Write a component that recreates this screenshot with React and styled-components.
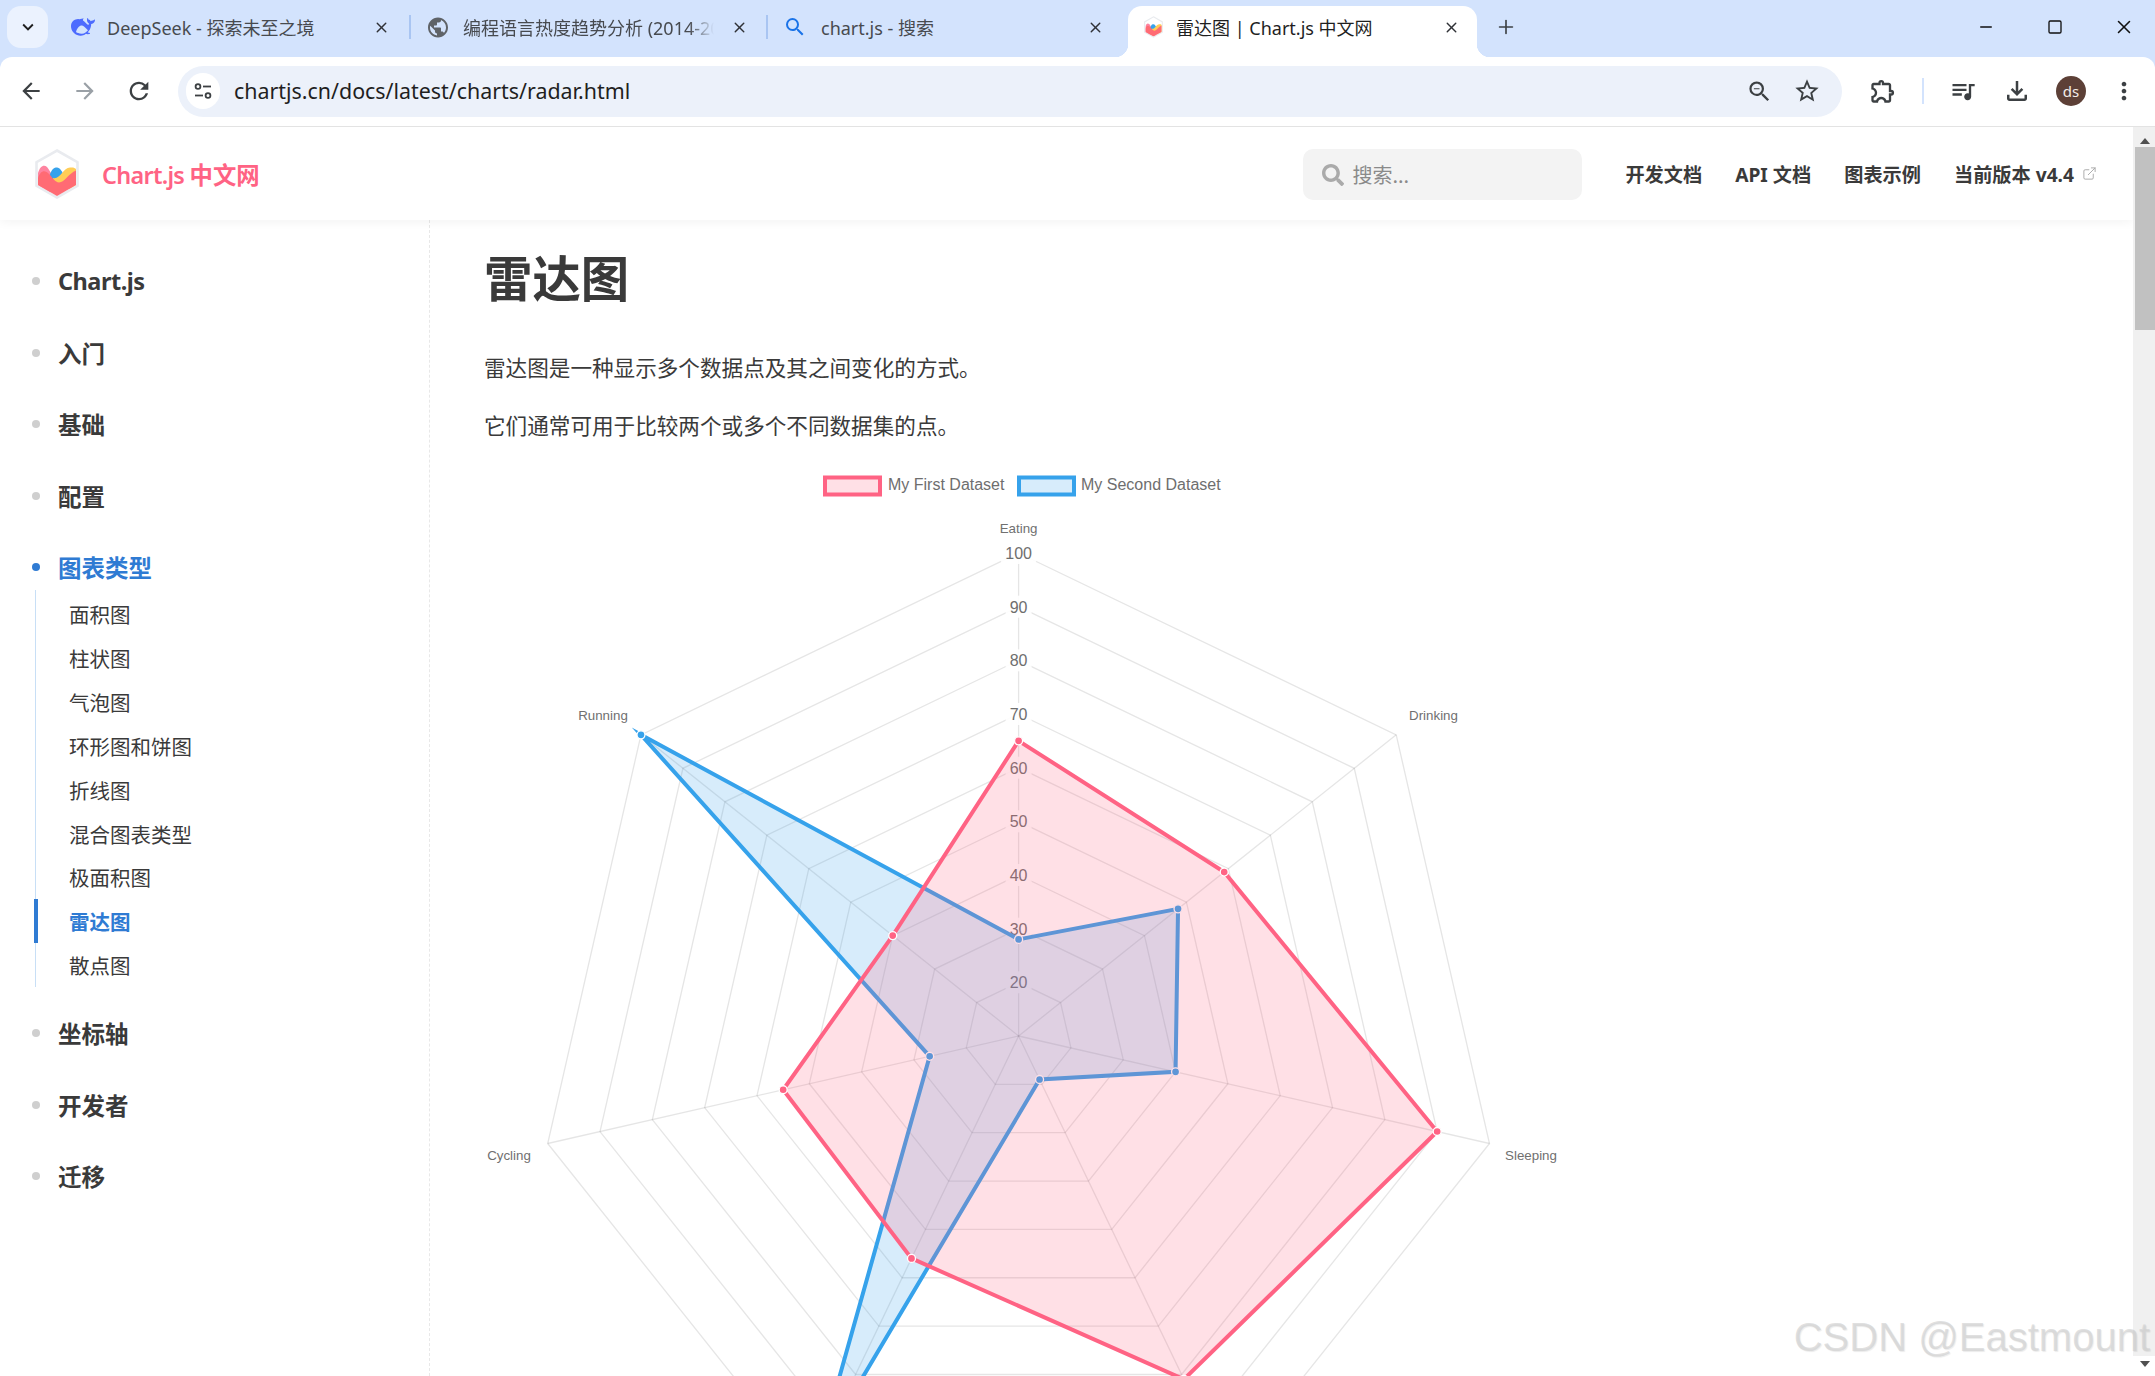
import React from 'react';
import styled, { createGlobalStyle } from 'styled-components';
import { ExternalLink, Minus, Plus, Square, X } from 'lucide-react';
import {
  MdArrowBack, MdArrowForward, MdRefresh, MdOutlineZoomOut, MdOutlineStarBorder,
  MdOutlineExtension, MdQueueMusic, MdOutlineFileDownload, MdMoreVert, MdPublic,
  MdSearch, MdKeyboardArrowDown,
} from 'react-icons/md';
import { FaSearch } from 'react-icons/fa';

const SANS = '"Noto Sans", "Noto Sans CJK SC", sans-serif';
const CJK = '"Noto Sans CJK SC", "Noto Sans", sans-serif';

const Global = createGlobalStyle`
  html, body { margin: 0; padding: 0; height: 100%; overflow: hidden; background: #fff; }
  * { box-sizing: border-box; }
  body { font-family: ${SANS}; color: #3a3a3a; }
`;

const Window = styled.div`
  position: relative;
  width: 2155px;
  height: 1376px;
  display: flex;
  flex-direction: column;
  overflow: hidden;
  background: #d3e3fd;
`;

/* ---------- tab strip ---------- */
const TabStrip = styled.div`
  height: 57px;
  display: flex;
  align-items: flex-start;
  padding-left: 7px;
  flex: none;
`;
const TabMenu = styled.div`
  width: 41px;
  height: 42px;
  margin-top: 6px;
  margin-right: 6px;
  border-radius: 14px;
  background: #ebf2fe;
  display: flex;
  align-items: center;
  justify-content: center;
  color: #1f1f1f;
`;
const Tab = styled.div`
  position: relative;
  width: ${(p) => p.$w}px;
  height: ${(p) => (p.$active ? 51 : 42)}px;
  margin-top: 6px;
  margin-left: ${(p) => (p.$active ? 6 : 0)}px;
  padding: 0 ${(p) => p.$right}px 0 ${(p) => p.$left}px;
  display: flex;
  align-items: center;
  background: ${(p) => (p.$active ? '#fff' : 'transparent')};
  border-radius: 14px 14px 0 0;
  ${(p) => p.$active && `
    padding-bottom: 9px;
    &::before, &::after {
      content: '';
      position: absolute;
      bottom: 0;
      width: 13px;
      height: 13px;
    }
    &::before { left: -13px; background: radial-gradient(circle at 0 0, transparent 13px, #fff 13.5px); }
    &::after { right: -13px; background: radial-gradient(circle at 100% 0, transparent 13px, #fff 13.5px); }
  `}
`;
const TabIcon = styled.div`
  width: 24px;
  height: 24px;
  flex: none;
  display: flex;
  align-items: center;
  justify-content: center;
  color: ${(p) => p.$color || '#5f6368'};
`;
const TabTitle = styled.div`
  flex: 1;
  min-width: 0;
  margin-left: ${(p) => p.$gap}px;
  margin-right: ${(p) => p.$endGap || 0}px;
  font-size: 18px;
  white-space: nowrap;
  overflow: hidden;
  color: ${(p) => (p.$active ? '#1f1f1f' : '#474a4f')};
  ${(p) => p.$fade && `
    -webkit-mask-image: linear-gradient(to right, #000 90%, transparent 100%);
    mask-image: linear-gradient(to right, #000 90%, transparent 100%);
  `}
`;
const TabClose = styled.div`
  width: 20px;
  height: 20px;
  flex: none;
  display: flex;
  align-items: center;
  justify-content: center;
  color: #2f3136;
`;
const TabDivider = styled.div`
  width: 2px;
  height: 24px;
  margin-top: 15px;
  background: #a9c5f2;
  flex: none;
`;
const NewTab = styled.div`
  margin-left: 18px;
  margin-top: 16px;
  color: #3c4043;
  display: flex;
`;
const WindowButtons = styled.div`
  margin-left: auto;
  margin-right: -3px;
  display: flex;
  height: 54px;
  align-items: center;
`;
const WinBtn = styled.div`
  width: 69px;
  display: flex;
  justify-content: center;
  color: #111;
`;

/* ---------- toolbar ---------- */
const Toolbar = styled.div`
  height: 70px;
  flex: none;
  background: #fff;
  border-radius: 12px 12px 0 0;
  border-bottom: 1px solid #e3e3e3;
  display: flex;
  align-items: center;
  padding: 0 0 1px 4px;
`;
const ToolBtn = styled.div`
  width: ${(p) => p.$w || 54}px;
  height: 44px;
  flex: none;
  display: flex;
  align-items: center;
  justify-content: center;
  color: ${(p) => (p.$off ? '#9aa0a6' : '#3c4043')};
`;
const Address = styled.div`
  width: 1664px;
  height: 51px;
  margin-left: 12px;
  margin-right: 14px;
  border-radius: 26px;
  background: #ecf1fa;
  display: flex;
  align-items: center;
  padding: 0 11px 0 8px;
  flex: none;
`;
const SiteChip = styled.div`
  width: 34px;
  height: 36px;
  border-radius: 18px;
  background: #fff;
  display: flex;
  align-items: center;
  justify-content: center;
  flex: none;
`;
const Url = styled.div`
  flex: 1;
  margin-left: 14px;
  padding-bottom: 2px;
  font-size: 21.4px;
  color: #1f1f1f;
  white-space: nowrap;
`;
const ToolSep = styled.div`
  width: 2px;
  height: 26px;
  margin: 0 12px;
  background: #d3e3fd;
  flex: none;
`;
const Avatar = styled.div`
  width: 30px;
  height: 30px;
  border-radius: 50%;
  background: #5d4037;
  color: #f2ece9;
  font-size: 15px;
  display: flex;
  align-items: center;
  justify-content: center;
`;

/* ---------- page ---------- */
const Viewport = styled.div`
  flex: 1;
  min-height: 0;
  display: flex;
  background: #fff;
`;
const Page = styled.div`
  flex: 1;
  min-width: 0;
  display: flex;
  flex-direction: column;
  overflow: hidden;
`;
const Navbar = styled.header`
  position: relative;
  z-index: 2;
  height: 93px;
  flex: none;
  display: flex;
  align-items: center;
  padding: 0 36px 0 35px;
  background: #fff;
  box-shadow: 0 2px 10px rgba(0, 0, 0, 0.05);
`;
const Brand = styled.div`
  margin-left: 23px;
  font-size: 23.4px;
  font-weight: 600;
  color: #ff6384;
  white-space: nowrap;
  letter-spacing: -0.7px;
  b { font-weight: 700; letter-spacing: 0; }
`;
const SearchBox = styled.div`
  margin-left: auto;
  margin-right: 43px;
  margin-top: 2px;
  width: 279px;
  height: 51px;
  border-radius: 10px;
  background: #f3f3f3;
  display: flex;
  align-items: center;
  padding-left: 19px;
  color: #aaa;
`;
const SearchHint = styled.span`
  margin-left: 8px;
  font-size: 20px;
  color: #8a8a8a;
  font-family: ${CJK};
`;
const NavLinks = styled.nav`
  display: flex;
  align-items: center;
  gap: 33px;
`;
const NavLink = styled.a`
  font-size: 19.2px;
  font-weight: 700;
  color: #3a3a3a;
  display: flex;
  align-items: center;
  gap: 8px;
  white-space: nowrap;
  svg { color: #a8a8a8; }
`;
const Body = styled.div`
  flex: 1;
  min-height: 0;
  display: flex;
`;
const Sidebar = styled.aside`
  width: 430px;
  flex: none;
  border-right: 1px dashed #e8e8e8;
  padding: 39px 0 0 32px;
`;
const Section = styled.section`
  margin-bottom: 27.5px;
`;
const SectionTitle = styled.div`
  height: 44px;
  display: flex;
  align-items: center;
  gap: 18px;
  font-size: 23.5px;
  font-weight: 700;
  letter-spacing: ${(p) => (p.$latin ? '-0.5px' : '0')};
  color: ${(p) => (p.$active ? '#2f7bd3' : '#3a3a3a')};
`;
const Dot = styled.i`
  width: 8px;
  height: 8px;
  border-radius: 50%;
  flex: none;
  background: ${(p) => (p.$active ? '#2f7bd3' : '#cfcfcf')};
`;
const SubList = styled.ul`
  list-style: none;
  margin: 1px 0 -3.5px 3px;
  padding: 2.5px 0 0;
  border-left: 1.4px solid #c8dff6;
`;
const SubItem = styled.li`
  position: relative;
  height: 43.85px;
  padding-left: 33px;
  display: flex;
  align-items: center;
  font-size: 20.5px;
  font-family: ${CJK};
  font-weight: ${(p) => (p.$active ? 700 : 400)};
  color: ${(p) => (p.$active ? '#2f7bd3' : '#3a3a3a')};
  ${(p) => p.$active && `
    &::before {
      content: '';
      position: absolute;
      left: -2px;
      top: 0;
      bottom: 0;
      width: 4px;
      background: #2f7bd3;
    }
  `}
`;
const Content = styled.main`
  flex: 1;
  min-width: 0;
  padding: 27px 0 0 54px;
`;
const Title = styled.h1`
  margin: 0;
  font-size: 48.4px;
  line-height: 58px;
  font-weight: 700;
  color: #3a3a3a;
  font-family: ${CJK};
`;
const Para = styled.p`
  margin: ${(p) => p.$top}px 0 0;
  font-size: 21.6px;
  line-height: 36px;
  color: #3a3a3a;
  font-family: ${CJK};
`;
const ChartSvg = styled.svg`
  display: block;
  margin-top: 20px;
  flex: none;
`;
const Scrollbar = styled.div`
  width: 22px;
  flex: none;
  background: #f0f0f0;
  display: flex;
  flex-direction: column;
`;
const ScrollBtn = styled.div`
  height: 20px;
  flex: none;
  display: flex;
  align-items: center;
  justify-content: center;
  padding: ${(p) => (p.$down ? '0 0 4px 2px' : '8px 0 0 2px')};
  background: ${(p) => (p.$down ? '#fff' : '#f0f0f0')};
  &::after {
    content: '';
    border-left: 5.5px solid transparent;
    border-right: 5.5px solid transparent;
    ${(p) => (p.$down ? 'border-top: 6px solid #505050;' : 'border-bottom: 6px solid #505050;')}
  }
`;
const ScrollThumb = styled.div`
  margin-left: 2px;
  height: 183px;
  background: #c1c1c1;
  flex: none;
`;
const ScrollRest = styled.div`
  flex: 1;
`;
const Watermark = styled.div`
  position: absolute;
  right: 5px;
  bottom: 16px;
  font-family: "Liberation Sans", sans-serif;
  font-size: 40px;
  line-height: 46px;
  color: rgba(205, 205, 205, 0.62);
  text-shadow: 1px 1px 1px rgba(0, 0, 0, 0.08);
  white-space: nowrap;
`;

/* ---------- drawings ---------- */
const DeepSeekIcon = () => (
  <svg width="24" height="24" viewBox="0 0 24 24" fill="#4d6bfe">
    <path d="M23.748 4.482c-.254-.124-.364.113-.512.234-.051.039-.094.09-.137.136-.372.397-.806.657-1.373.626-.829-.046-1.537.214-2.163.848-.133-.782-.575-1.248-1.247-1.548-.352-.156-.708-.311-.955-.65-.172-.241-.219-.51-.305-.774-.055-.16-.11-.323-.293-.35-.2-.031-.278.136-.356.276-.313.572-.434 1.202-.422 1.84.027 1.436.633 2.58 1.838 3.393.137.093.172.187.129.323-.082.28-.18.552-.266.833-.055.179-.137.217-.329.14a5.526 5.526 0 01-1.736-1.18c-.857-.828-1.631-1.742-2.597-2.458a11.365 11.365 0 00-.689-.471c-.985-.957.13-1.743.388-1.836.27-.098.093-.432-.779-.428-.872.004-1.67.295-2.687.684a3.055 3.055 0 01-.465.137 9.597 9.597 0 00-2.883-.102c-1.885.21-3.39 1.102-4.497 2.623C.082 8.606-.231 10.684.152 12.85c.403 2.284 1.569 4.175 3.36 5.653 1.858 1.533 3.997 2.284 6.438 2.14 1.482-.085 3.133-.284 4.994-1.86.47.234.962.327 1.78.397.63.059 1.236-.03 1.705-.128.735-.156.684-.837.419-.961-2.155-1.004-1.682-.595-2.113-.926 1.096-1.296 2.746-2.642 3.392-7.003.05-.347.007-.565 0-.845-.004-.17.035-.237.23-.256a4.173 4.173 0 001.545-.475c1.396-.763 1.96-2.015 2.093-3.517.02-.23-.004-.467-.247-.588z" />
    <path d="M5 17c1.500-5 5-8 8-5.500 1.500 1.200 3 3 4 3.800-1 1.300-4 3.800-6.500 3.500C8 18.400 6.300 18 5 17z" fill="#d3e3fd" />
  </svg>
);

const SiteInfoIcon = () => (
  <svg width="20" height="20" viewBox="0 0 20 20" fill="none" stroke="#3c4043" strokeWidth="1.8">
    <circle cx="5" cy="5.5" r="2.4" />
    <path d="M10 5.500h8" />
    <path d="M2 14.500h8" />
    <circle cx="15" cy="14.500" r="2.4" />
  </svg>
);

const ChartLogo = ({ w, h }) => (
  <svg width={w} height={h} viewBox="0 0 44 50" style={{ flex: 'none' }}>
    <defs>
      <clipPath id={`hex${w}`}>
        <path d="M22 3 41 14V36L22 47 3 36V14Z" />
      </clipPath>
    </defs>
    <path d="M22 1.500 42.500 13.200V36.800L22 48.500 1.500 36.800V13.200Z" fill="#fff" stroke="#e9ebef" strokeWidth="2.6" />
    <g clipPath={`url(#hex${w})`}>
      <path d="M3 24C5 17 9 15 12 18S18 30 24 32L12 47H3Z" fill="#fe84a0" />
      <path d="M14 28C17 19 19 18.500 22 18.500S27 22 30 29L22 34Z" fill="#36a2eb" />
      <path d="M18 29C25 31 28 19 35 18.500S41 21 44 24V40H18Z" fill="#ffcd56" />
      <path d="M3 29C6 21 10 21 14 25S21 35 26 33 34 24 42 21V50H3Z" fill="#ff6b74" />
    </g>
  </svg>
);

const CX = 1018.6;
const CY = 1037;
const R100 = 483;
const FIRST = [65, 59, 90, 81, 56, 55, 40];
const SECOND = [28, 48, 40, 19, 96, 27, 100];
const TICKS = [20, 30, 40, 50, 60, 70, 80, 90, 100];
const AXES = [0, 1, 2, 3, 4, 5, 6];

const polar = (i, r) => {
  const a = (i * 2 * Math.PI) / 7;
  return [CX + r * Math.sin(a), CY - r * Math.cos(a)];
};
const radius = (v) => ((v - 10) / 90) * R100;
const pointsOf = (vals) => vals.map((v, i) => polar(i, radius(v)));
const toAttr = (pts) => pts.map((p) => p.map((n) => n.toFixed(2)).join(',')).join(' ');

const Dataset = ({ values, rgb }) => {
  const pts = pointsOf(values);
  return (
    <g>
      <polygon
        points={toAttr(pts)}
        fill={`rgba(${rgb},0.2)`}
        stroke={`rgb(${rgb})`}
        strokeWidth="4"
        strokeLinejoin="miter"
        strokeMiterlimit="10"
      />
      {pts.map((p, i) => (
        <circle key={i} cx={p[0]} cy={p[1]} r="4" fill={`rgb(${rgb})`} stroke="#fff" strokeWidth="1.33" />
      ))}
    </g>
  );
};

const POINT_LABELS = [
  ['Eating', CX, 529],
  ['Drinking', 1433.5, 716.5],
  ['Sleeping', 1531, 1156.5],
  ['Cycling', 509, 1156.5],
  ['Running', 603, 716.5],
];

const RadarChart = () => (
  <ChartSvg width="1200" height="1100" viewBox="484 464 1200 1100" fontFamily='"Liberation Sans", Arial, sans-serif'>
    <rect x="825" y="478.500" width="55" height="17" fill="rgba(255,99,132,0.2)" stroke="rgb(255,99,132)" strokeWidth="4" />
    <text x="888" y="491" fontSize="16" fill="#6e6e6e">My First Dataset</text>
    <rect x="1019" y="478.500" width="55" height="17" fill="rgba(54,162,235,0.2)" stroke="rgb(54,162,235)" strokeWidth="4" />
    <text x="1081" y="491" fontSize="16" fill="#6e6e6e">My Second Dataset</text>

    <g stroke="rgba(0,0,0,0.1)" strokeWidth="1.33" fill="none">
      {AXES.map((i) => {
        const p = polar(i, R100);
        return <line key={i} x1={CX} y1={CY} x2={p[0]} y2={p[1]} />;
      })}
      {TICKS.map((t) => (
        <polygon key={t} points={toAttr(AXES.map((i) => polar(i, radius(t))))} />
      ))}
    </g>
    {POINT_LABELS.map(([l, x, y]) => (
      <text key={l} x={x} y={y + 4.5} fontSize="13.33" fill="#707070" textAnchor="middle">{l}</text>
    ))}
    {TICKS.map((t) => {
      const y = CY - radius(t);
      const w = t === 100 ? 35 : 26;
      return (
        <g key={t}>
          <rect x={CX - w / 2} y={y - 11} width={w} height="22" fill="rgba(255,255,255,0.9)" />
          <text x={CX} y={y + 6} fontSize="16" fill="#6e6e6e" textAnchor="middle">{t}</text>
        </g>
      );
    })}
    <Dataset values={SECOND} rgb="54,162,235" />
    <Dataset values={FIRST} rgb="255,99,132" />
  </ChartSvg>
);

const SECTIONS_TOP = ['Chart.js', '入门', '基础', '配置'];
const SECTIONS_BOTTOM = ['坐标轴', '开发者', '迁移'];
const CHART_TYPES = ['面积图', '柱状图', '气泡图', '环形图和饼图', '折线图', '混合图表类型', '极面积图', '雷达图', '散点图'];

export default function App() {
  return (
    <Window>
      <Global />
      <TabStrip>
        <TabMenu><MdKeyboardArrowDown size={22} /></TabMenu>
        <Tab $w={355} $left={17} $right={18}>
          <TabIcon><DeepSeekIcon /></TabIcon>
          <TabTitle $gap={12}>DeepSeek - 探索未至之境</TabTitle>
          <TabClose><X size={17} strokeWidth={2} /></TabClose>
        </Tab>
        <TabDivider />
        <Tab $w={355} $left={15} $right={17}>
          <TabIcon><MdPublic size={25} /></TabIcon>
          <TabTitle $gap={13} $fade $endGap={15}>编程语言热度趋势分析 (2014-2025)</TabTitle>
          <TabClose><X size={17} strokeWidth={2} /></TabClose>
        </Tab>
        <TabDivider />
        <Tab $w={354} $left={15} $right={17}>
          <TabIcon $color="#1a73e8"><MdSearch size={24} /></TabIcon>
          <TabTitle $gap={14}>chart.js - 搜索</TabTitle>
          <TabClose><X size={17} strokeWidth={2} /></TabClose>
        </Tab>
        <Tab $active $w={349} $left={13} $right={16}>
          <TabIcon><ChartLogo w={19} h={22} /></TabIcon>
          <TabTitle $gap={11} $active>雷达图 | Chart.js 中文网</TabTitle>
          <TabClose><X size={17} strokeWidth={2} /></TabClose>
        </Tab>
        <NewTab><Plus size={22} strokeWidth={1.8} /></NewTab>
        <WindowButtons>
          <WinBtn><Minus size={18} strokeWidth={2} /></WinBtn>
          <WinBtn><Square size={16} strokeWidth={2} /></WinBtn>
          <WinBtn><X size={22} strokeWidth={1.7} /></WinBtn>
        </WindowButtons>
      </TabStrip>

      <Toolbar>
        <ToolBtn><MdArrowBack size={26} /></ToolBtn>
        <ToolBtn $off><MdArrowForward size={26} /></ToolBtn>
        <ToolBtn><MdRefresh size={28} /></ToolBtn>
        <Address>
          <SiteChip><SiteInfoIcon /></SiteChip>
          <Url>chartjs.cn/docs/latest/charts/radar.html</Url>
          <ToolBtn $w={48}><MdOutlineZoomOut size={27} /></ToolBtn>
          <ToolBtn $w={48}><MdOutlineStarBorder size={28} /></ToolBtn>
        </Address>
        <ToolBtn><MdOutlineExtension size={28} /></ToolBtn>
        <ToolSep />
        <ToolBtn><MdQueueMusic size={28} /></ToolBtn>
        <ToolBtn><MdOutlineFileDownload size={30} /></ToolBtn>
        <ToolBtn><Avatar>ds</Avatar></ToolBtn>
        <ToolBtn $w={52}><MdMoreVert size={28} /></ToolBtn>
      </Toolbar>

      <Viewport>
        <Page>
          <Navbar>
            <ChartLogo w={44} h={50} />
            <Brand>Chart.js <b>中文网</b></Brand>
            <SearchBox>
              <FaSearch size={22} />
              <SearchHint>搜索...</SearchHint>
            </SearchBox>
            <NavLinks>
              <NavLink>开发文档</NavLink>
              <NavLink>API 文档</NavLink>
              <NavLink>图表示例</NavLink>
              <NavLink>当前版本 v4.4 <ExternalLink size={15} strokeWidth={1.5} /></NavLink>
            </NavLinks>
          </Navbar>
          <Body>
            <Sidebar>
              {SECTIONS_TOP.map((s, i) => (
                <Section key={s}>
                  <SectionTitle $latin={i === 0}><Dot />{s}</SectionTitle>
                </Section>
              ))}
              <Section>
                <SectionTitle $active><Dot $active />图表类型</SectionTitle>
                <SubList>
                  {CHART_TYPES.map((t) => (
                    <SubItem key={t} $active={t === '雷达图'}>{t}</SubItem>
                  ))}
                </SubList>
              </Section>
              {SECTIONS_BOTTOM.map((s) => (
                <Section key={s}>
                  <SectionTitle><Dot />{s}</SectionTitle>
                </Section>
              ))}
            </Sidebar>
            <Content>
              <Title>雷达图</Title>
              <Para $top={44}>雷达图是一种显示多个数据点及其之间变化的方式。</Para>
              <Para $top={22}>它们通常可用于比较两个或多个不同数据集的点。</Para>
              <RadarChart />
            </Content>
          </Body>
        </Page>
        <Scrollbar>
          <ScrollBtn />
          <ScrollThumb />
          <ScrollRest />
          <ScrollBtn $down />
        </Scrollbar>
      </Viewport>
      <Watermark>CSDN @Eastmount</Watermark>
    </Window>
  );
}
